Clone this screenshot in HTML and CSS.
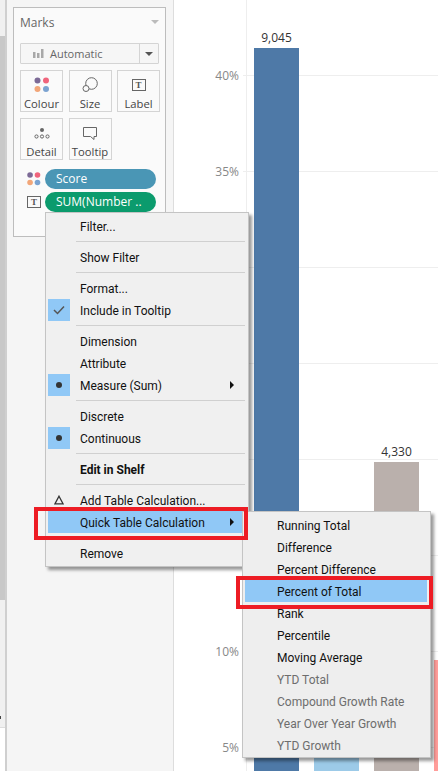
FILE: index.html
```html
<!DOCTYPE html>
<html lang="en">
<head>
    <meta charset="UTF-8">
    <meta name="viewport" content="width=device-width, initial-scale=1.0">
    <title>Marks - Quick Table Calculation</title>
    <link rel="stylesheet" href="styles.css">
</head>
<body>
    <div class="app">
        <div class="scrollbar">
            <div class="scroll-thumb"></div>
            <div class="scroll-track"><span class="scroll-mark"></span></div>
            <div class="scroll-end"></div>
        </div>

        <aside class="sidebar">
            <section class="marks-card">
                <div class="marks-header">
                    <span>Marks</span>
                    <span class="header-caret"></span>
                </div>

                <div class="mark-type">
                    <div class="mark-type-label">
                        <svg width="11" height="9" viewBox="0 0 11 9"><path d="M0 3h2.500v6H0zM4 4h2.500v5H4zM8 0h2.500v9H8z" fill="#a8a8a8"/></svg>
                        <span>Automatic</span>
                    </div>
                    <div class="mark-type-arrow"><span class="dropdown-caret"></span></div>
                </div>

                <div class="mark-buttons">
                    <div class="mark-button">
                        <svg width="16" height="16" viewBox="0 0 16 16">
                            <circle cx="3.500" cy="3.500" r="3" fill="#7c6a96"/>
                            <circle cx="12" cy="3.500" r="3" fill="#f0647c"/>
                            <circle cx="3.500" cy="12" r="3" fill="#f2a679"/>
                            <circle cx="12" cy="12" r="3" fill="#7ba3d1"/>
                        </svg>
                        <span>Colour</span>
                    </div>
                    <div class="mark-button">
                        <svg width="16" height="16" viewBox="0 0 16 16" fill="#fafafa" stroke="#666">
                            <circle cx="9.500" cy="6.500" r="5.800"/>
                            <circle cx="4" cy="11.500" r="3"/>
                        </svg>
                        <span>Size</span>
                    </div>
                    <div class="mark-button">
                        <span class="t-icon">T</span>
                        <span>Label</span>
                    </div>
                    <div class="mark-button">
                        <svg width="16" height="16" viewBox="0 0 16 16" fill="none" stroke="#666">
                            <circle cx="8" cy="5" r="2" fill="#666" stroke="none"/>
                            <circle cx="2.500" cy="11.500" r="1.600"/>
                            <circle cx="8" cy="11.500" r="1.600"/>
                            <circle cx="13.500" cy="11.500" r="1.600"/>
                        </svg>
                        <span>Detail</span>
                    </div>
                    <div class="mark-button">
                        <svg width="16" height="16" viewBox="0 0 16 16" fill="none" stroke="#666">
                            <path d="M1.500 2.500h13v9h-2.500v3l-3.500-3H1.500z"/>
                        </svg>
                        <span>Tooltip</span>
                    </div>
                </div>

                <div class="shelf-row">
                    <svg class="shelf-icon" width="14" height="14" viewBox="0 0 16 16">
                        <circle cx="3.500" cy="3.500" r="3.200" fill="#7c6a96"/>
                        <circle cx="12" cy="3.500" r="3.200" fill="#f0647c"/>
                        <circle cx="3.500" cy="12" r="3.200" fill="#f2a679"/>
                        <circle cx="12" cy="12" r="3.200" fill="#7ba3d1"/>
                    </svg>
                    <span class="pill pill-score">Score</span>
                </div>
                <div class="shelf-row">
                    <span class="t-icon shelf-icon">T</span>
                    <span class="pill pill-sum">SUM(Number ..</span>
                </div>
            </section>
        </aside>

        <main class="chart">
            <div class="ticks">
                <div class="tick"><span class="tick-label">40%</span><span class="tick-line"></span></div>
                <div class="tick"><span class="tick-label">35%</span><span class="tick-line"></span></div>
                <div class="tick"><span class="tick-label">30%</span><span class="tick-line"></span></div>
                <div class="tick"><span class="tick-label">25%</span><span class="tick-line"></span></div>
                <div class="tick"><span class="tick-label">20%</span><span class="tick-line"></span></div>
                <div class="tick"><span class="tick-label">15%</span><span class="tick-line"></span></div>
                <div class="tick"><span class="tick-label">10%</span><span class="tick-line"></span></div>
                <div class="tick"><span class="tick-label">5%</span><span class="tick-line"></span></div>
            </div>
            <div class="bars">
                <div class="bar-col">
                    <span class="bar-value">9,045</span>
                    <div class="bar bar-blue" style="height: 723px"></div>
                </div>
                <div class="bar-col">
                    <span class="bar-value"></span>
                    <div class="bar bar-sky" style="height: 170px"></div>
                </div>
                <div class="bar-col">
                    <span class="bar-value">4,330</span>
                    <div class="bar bar-taupe" style="height: 309px"></div>
                </div>
                <div class="bar-col">
                    <span class="bar-value"></span>
                    <div class="bar bar-pink" style="height: 111px"></div>
                </div>
            </div>
        </main>
    </div>

    <!-- context menu -->
    <div class="menu menu-main">
        <div class="menu-item"><span class="menu-icon"></span><span class="menu-text">Filter...</span></div>
        <div class="menu-sep"></div>
        <div class="menu-item"><span class="menu-icon"></span><span class="menu-text">Show Filter</span></div>
        <div class="menu-sep"></div>
        <div class="menu-item"><span class="menu-icon"></span><span class="menu-text">Format...</span></div>
        <div class="menu-item">
            <span class="menu-icon is-on">
                <svg width="12" height="10" viewBox="0 0 12 10" fill="none" stroke="#555" stroke-width="1.500"><path d="M1 5l3.500 3.500L11 1.500"/></svg>
            </span>
            <span class="menu-text">Include in Tooltip</span>
        </div>
        <div class="menu-sep"></div>
        <div class="menu-item"><span class="menu-icon"></span><span class="menu-text">Dimension</span></div>
        <div class="menu-item"><span class="menu-icon"></span><span class="menu-text">Attribute</span></div>
        <div class="menu-item">
            <span class="menu-icon is-on"><span class="radio-dot"></span></span>
            <span class="menu-text">Measure (Sum)</span>
            <span class="menu-arrow"></span>
        </div>
        <div class="menu-sep"></div>
        <div class="menu-item"><span class="menu-icon"></span><span class="menu-text">Discrete</span></div>
        <div class="menu-item">
            <span class="menu-icon is-on"><span class="radio-dot"></span></span>
            <span class="menu-text">Continuous</span>
        </div>
        <div class="menu-sep"></div>
        <div class="menu-item menu-bold"><span class="menu-icon"></span><span class="menu-text">Edit in Shelf</span></div>
        <div class="menu-sep"></div>
        <div class="menu-item">
            <span class="menu-icon">
                <svg width="10" height="10" viewBox="0 0 10 10" fill="none" stroke="#333" stroke-width="1.300"><path d="M5 1.200L9 8.800H1z"/></svg>
            </span>
            <span class="menu-text">Add Table Calculation...</span>
        </div>
        <div class="menu-item is-active">
            <span class="menu-icon"></span>
            <span class="menu-text">Quick Table Calculation</span>
            <span class="menu-arrow"></span>
        </div>
        <div class="menu-sep"></div>
        <div class="menu-item"><span class="menu-icon"></span><span class="menu-text">Remove</span></div>
    </div>

    <div class="menu menu-sub">
        <div class="menu-item"><span class="menu-icon"></span><span class="menu-text">Running Total</span></div>
        <div class="menu-item"><span class="menu-icon"></span><span class="menu-text">Difference</span></div>
        <div class="menu-item"><span class="menu-icon"></span><span class="menu-text">Percent Difference</span></div>
        <div class="menu-item is-active"><span class="menu-icon"></span><span class="menu-text">Percent of Total</span></div>
        <div class="menu-item"><span class="menu-icon"></span><span class="menu-text">Rank</span></div>
        <div class="menu-item"><span class="menu-icon"></span><span class="menu-text">Percentile</span></div>
        <div class="menu-item"><span class="menu-icon"></span><span class="menu-text">Moving Average</span></div>
        <div class="menu-item is-disabled"><span class="menu-icon"></span><span class="menu-text">YTD Total</span></div>
        <div class="menu-item is-disabled"><span class="menu-icon"></span><span class="menu-text">Compound Growth Rate</span></div>
        <div class="menu-item is-disabled"><span class="menu-icon"></span><span class="menu-text">Year Over Year Growth</span></div>
        <div class="menu-item is-disabled"><span class="menu-icon"></span><span class="menu-text">YTD Growth</span></div>
    </div>

    <!-- red callouts drawn over the menus -->
    <div class="callout callout-main"></div>
    <div class="callout callout-sub"></div>
</body>
</html>
```

FILE: styles.css
```css
/* Tableau marks card with table calculation menu */
html,
body {
    height: 100%;
}

body {
    margin: 0;
    overflow: hidden;
    position: relative;
    background-color: white;
    font-family: "Open Sans", Arial, sans-serif;
    font-size: 12px;
    color: #333;
}

.app {
    display: flex;
    height: 771px;
}

/* left scrollbar */
.scrollbar {
    width: 5px;
    flex: none;
    display: flex;
    flex-direction: column;
    padding-top: 36px;
    background-color: #f0f0f0;
}

.scroll-thumb {
    height: 564px;
    background-color: #c8c8c8;
}

.scroll-track {
    flex: 1;
    padding-top: 116px;
}

.scroll-mark {
    display: block;
    width: 1px;
    height: 3px;
    background-color: #444;
}

.scroll-end {
    height: 43px;
    background-color: white;
    border-top: 1px solid #ddd;
}

/* marks card */
.sidebar {
    width: 169px;
    flex: none;
    box-sizing: border-box;
    padding: 7px 7px 0 6px;
    background-color: #f5f5f5;
    border-left: 2px solid #cfcfcf;
    border-right: 1px solid #ddd;
}

.marks-card {
    box-sizing: border-box;
    height: 230px;
    padding: 0 6px;
    background-color: #fafafa;
    border: 1px solid #bdbdbd;
}

.marks-header {
    display: flex;
    justify-content: space-between;
    align-items: center;
    height: 28px;
    margin-bottom: 7px;
    color: #666;
    font-size: 12px;
}

.header-caret {
    width: 0;
    height: 0;
    border-left: 4px solid transparent;
    border-right: 4px solid transparent;
    border-top: 4px solid #bbb;
}

.mark-type {
    display: flex;
    height: 21px;
    box-sizing: border-box;
    border: 1px solid #d4d4d4;
    border-radius: 1px;
    background-color: #f6f6f6;
    color: #666;
    font-size: 11px;
}

.mark-type-label {
    flex: 1;
    display: flex;
    align-items: center;
    gap: 6px;
    padding-left: 12px;
    border-right: 1px solid #d4d4d4;
}

.mark-type-arrow {
    width: 18px;
    display: flex;
    align-items: center;
    justify-content: center;
}

.dropdown-caret {
    width: 0;
    height: 0;
    border-left: 4px solid transparent;
    border-right: 4px solid transparent;
    border-top: 4px solid #555;
}

.mark-buttons {
    display: grid;
    grid-template-columns: 43px 43px 43px;
    grid-auto-rows: 42px;
    column-gap: 5.500px;
    row-gap: 6px;
    margin-top: 6px;
}

.mark-button {
    display: flex;
    flex-direction: column;
    align-items: center;
    box-sizing: border-box;
    padding-top: 6px;
    border: 1px solid #d4d4d4;
    background-color: #fafafa;
    color: #444;
    font-size: 11.250px;
    gap: 3px;
}

.mark-button svg,
.mark-button .t-icon {
    flex: none;
}

.t-icon {
    display: flex;
    align-items: center;
    justify-content: center;
    box-sizing: border-box;
    width: 14px;
    height: 12px;
    margin: 2px 0;
    border: 1px solid #666;
    font-family: "Liberation Serif", serif;
    font-size: 9px;
    font-weight: bold;
    color: #555;
}

.shelf-row {
    display: flex;
    align-items: center;
    height: 20px;
    margin-top: 3px;
}

.mark-buttons + .shelf-row {
    margin-top: 9px;
}

.shelf-icon {
    flex: none;
    margin: 0 4px 0 7px;
}

.pill {
    width: 111px;
    height: 20px;
    box-sizing: border-box;
    padding-left: 11px;
    border-radius: 10px;
    line-height: 20px;
    color: white;
    white-space: nowrap;
}

.pill-score {
    background-color: #4a96b5;
}

.pill-sum {
    background-color: #0b9b6d;
}

/* chart */
.chart {
    flex: 1;
    position: relative;
    overflow: hidden;
    background-color: white;
}

.ticks {
    padding-top: 27px;
}

.tick {
    display: flex;
    align-items: center;
    height: 96px;
}

.tick-label {
    width: 65px;
    text-align: right;
    color: #888;
    font-size: 12px;
}

.tick-line {
    flex: 1;
    height: 1px;
    margin-left: 4px;
    background-color: #eee;
}

.bars {
    position: absolute;
    left: 72px;
    top: 0;
    bottom: 0;
    display: flex;
    align-items: flex-end;
    gap: 15px;
    padding-left: 7px;
    border-left: 1px solid #eee;
}

.bar-col {
    width: 45px;
    flex: none;
    display: flex;
    flex-direction: column;
    align-items: center;
}

.bar-value {
    margin-bottom: 2px;
    color: #333;
    font-size: 12px;
}

.bar {
    width: 100%;
}

.bar-blue {
    background-color: #4e79a7;
}

.bar-sky {
    background-color: #9ccae8;
}

.bar-taupe {
    background-color: #bab0ac;
}

.bar-pink {
    background-color: #ff9d9a;
}

/* menus */
.menu {
    position: absolute;
    box-sizing: border-box;
    padding: 2px;
    border: 1px solid #c4c4c4;
    background-color: #f0f0f0;
    box-shadow: 3px 3px 3px rgba(0, 0, 0, 0.4);
    color: #111;
    font-family: Roboto, Arial, sans-serif;
    font-size: 12px;
}

.menu-main {
    left: 45px;
    top: 212px;
    width: 204px;
    height: 355px;
}

.menu-sub {
    left: 242px;
    top: 511px;
    width: 189px;
    height: 247px;
    padding: 2px 3px 2px 2px;
    background-color: #eee;
}

.menu-item {
    display: flex;
    align-items: center;
    height: 22px;
    white-space: nowrap;
}

.menu-icon {
    width: 22px;
    height: 22px;
    flex: none;
    margin-right: 10px;
    display: flex;
    align-items: center;
    justify-content: center;
}

.menu-icon.is-on {
    background-color: #90c8f6;
}

.menu-text {
    margin-top: 2px;
}

.radio-dot {
    width: 6px;
    height: 6px;
    border-radius: 50%;
    background-color: #333;
}

.menu-sep {
    height: 1px;
    margin: 4px 1px 4px 28px;
    background-color: #d0d0d0;
}

.menu-arrow {
    width: 0;
    height: 0;
    margin-left: auto;
    margin-right: 12px;
    border-top: 4px solid transparent;
    border-bottom: 4px solid transparent;
    border-left: 4px solid #111;
}

.menu-bold {
    font-weight: bold;
}

.is-active {
    background-color: #90c8f6;
}

.is-disabled {
    color: #6d6d6d;
}

.callout {
    position: absolute;
    box-sizing: border-box;
    border: 4px solid #ed1c24;
}

.callout-main {
    left: 34px;
    top: 507px;
    width: 214px;
    height: 33px;
}

.callout-sub {
    left: 236px;
    top: 576px;
    width: 197px;
    height: 33px;
}
```
